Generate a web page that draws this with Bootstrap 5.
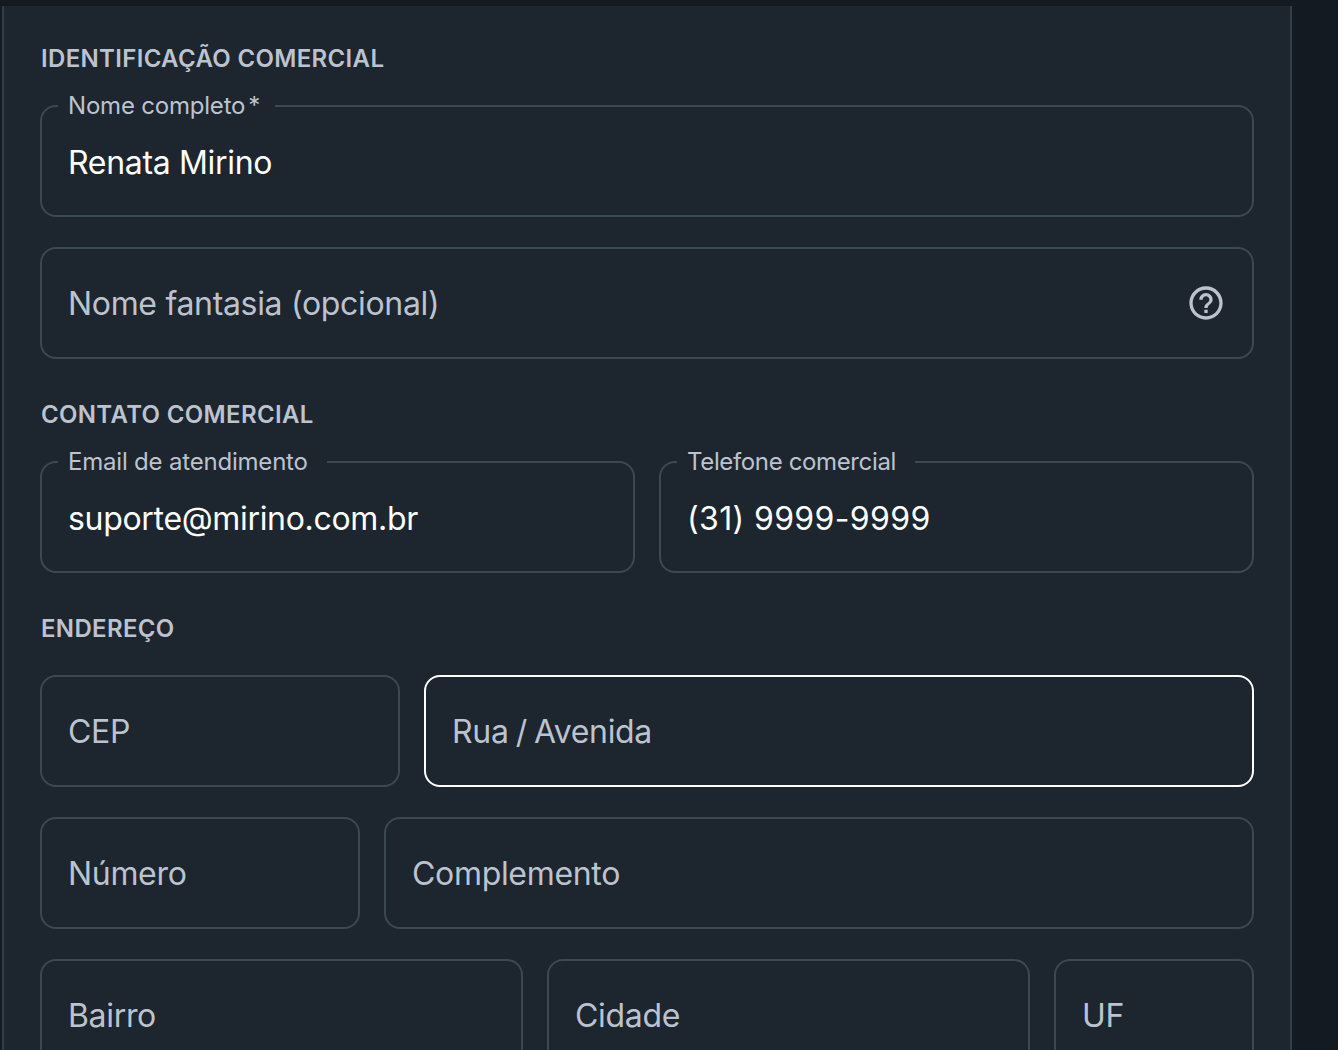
<!DOCTYPE html>
<html lang="pt-BR">
<head>
<meta charset="utf-8">
<title>Cadastro</title>
<link href="https://cdn.jsdelivr.net/npm/bootstrap@5.3.0/dist/css/bootstrap.min.css" rel="stylesheet">
<style>
html,body{height:100%;overflow:hidden}
body{background:#141a21;font-family:Inter,"Liberation Sans",sans-serif;padding-top:6px}
.shell{width:1290px;height:1044px;margin-left:2px;background:#1d252e;border-left:2px solid #333e49;border-right:2px solid #333e49;padding:39px 36px 0 36px;overflow:hidden}
.sect{font-size:24px;line-height:28px;font-weight:600;color:#bcc3cf;margin:0;letter-spacing:.34px;padding-left:1px}
.sect.later{margin-top:42px}
.ofield{position:relative;height:112px;border:2px solid #3c4853;border-radius:16px;flex:1 1 0;min-width:0}
.ofield.on{border-color:#fff}
.ofield input{width:100%;height:100%;background:transparent;border:0;outline:0;padding:0 26px;font:400 32px/1 Inter,sans-serif;letter-spacing:-.32px;color:#fff}
.ofield input.filled{padding-top:2px}
.ofield input.digits{letter-spacing:.36px}
.ofield input.slashy{word-spacing:-1.5px}
.ofield input::placeholder{color:#bcc3cf;opacity:1}
.ofield label{position:absolute;top:-15px;left:16px;background:#1d252e;padding:0 19px 0 10px;font-size:24px;line-height:28px;letter-spacing:-.2px;color:#bcc3cf;white-space:nowrap}
.ofield label.tight{letter-spacing:-.36px}
.ofield label span{margin:0 -4px 0 3px}
.ofield .tip{position:absolute;right:26px;top:34px;width:40px;height:40px}
.w-cep{flex:0 0 360px}.w-num{flex:0 0 320px}.w-uf{flex:0 0 200px}
.rowgap{gap:24px}
.stack{margin-top:30px}
.sub-a{margin-top:32px}
</style>
</head>
<body>
<main class="shell">
<h2 class="sect">IDENTIFICAÇÃO COMERCIAL</h2>
<div class="d-flex sub-a"><div class="ofield"><label for="a">Nome completo<span>*</span></label><input id="a" class="filled" value="Renata Mirino"></div></div>
<div class="d-flex stack"><div class="ofield"><input placeholder="Nome fantasia (opcional)">
<svg class="tip" viewBox="0 0 24 24" fill="#bcc3cf" aria-hidden="true"><path d="M11 18h2v-2h-2v2zm1-16C6.48 2 2 6.48 2 12s4.48 10 10 10 10-4.48 10-10S17.52 2 12 2zm0 18c-4.41 0-8-3.59-8-8s3.59-8 8-8 8 3.59 8 8-3.59 8-8 8zm0-14c-2.21 0-4 1.79-4 4h2c0-1.1.9-2 2-2s2 .9 2 2c0 2-3 1.75-3 5h2c0-2.25 3-2.5 3-5 0-2.21-1.79-4-4-4z"/></svg></div></div>
<h2 class="sect later">CONTATO COMERCIAL</h2>
<div class="d-flex rowgap sub-a"><div class="ofield"><label for="b">Email de atendimento</label><input id="b" class="filled" value="suporte@mirino.com.br"></div><div class="ofield"><label for="c" class="tight">Telefone comercial</label><input id="c" class="filled digits" value="(31) 9999-9999"></div></div>
<h2 class="sect later">ENDEREÇO</h2>
<div class="d-flex rowgap sub-a"><div class="ofield w-cep"><input placeholder="CEP"></div><div class="ofield on"><input class="slashy" placeholder="Rua / Avenida"></div></div>
<div class="d-flex rowgap stack"><div class="ofield w-num"><input placeholder="Número"></div><div class="ofield"><input placeholder="Complemento"></div></div>
<div class="d-flex rowgap stack"><div class="ofield"><input placeholder="Bairro"></div><div class="ofield"><input placeholder="Cidade"></div><div class="ofield w-uf"><input placeholder="UF"></div></div>
</main>
<script src="https://cdn.jsdelivr.net/npm/bootstrap@5.3.0/dist/js/bootstrap.bundle.min.js"></script>
</body>
</html>
